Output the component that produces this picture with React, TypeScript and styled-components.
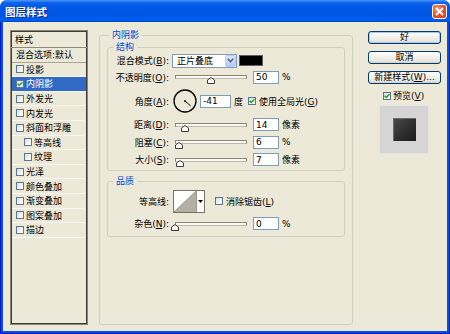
import React from 'react';
import styled, { createGlobalStyle } from 'styled-components';

const FONT = `"DejaVu Sans", "Noto Sans CJK SC", sans-serif`;

const GlobalStyle = createGlobalStyle`
  * { box-sizing: border-box; }
  html, body { margin: 0; padding: 0; background: #ffffff; }
  body { font-family: ${FONT}; font-size: 9px; color: #000; }
`;

const Window = styled.div`
  width: 450px;
  height: 334px;
  display: flex;
  flex-direction: column;
  background: #0A4FD8;
  border-radius: 7px 7px 0 0;
  overflow: hidden;
`;

const TitleBar = styled.div`
  flex: none;
  height: 22px;
  display: flex;
  align-items: center;
  justify-content: space-between;
  padding: 0 3px 0 5px;
  background: linear-gradient(to bottom, #4A9AFA 0%, #0E63EB 12%, #0057E6 35%, #0055E3 70%, #0060F2 90%, #0048CC 100%);
`;

const Title = styled.span`
  color: #fff;
  font-weight: bold;
  font-size: 10.5px;
  text-shadow: 1px 1px 0 #0A2A8C;
`;

const CloseButton = styled.div`
  width: 15px;
  height: 15px;
  border: 1px solid #fff;
  border-radius: 3px;
  background: radial-gradient(circle at 35% 30%, #F6A487 0%, #E5582E 45%, #C93D17 100%);
  display: flex;
  align-items: center;
  justify-content: center;
`;

const Frame = styled.div`
  flex: 1;
  display: flex;
  padding: 0 3px 3px;
  background: #0A4FD8;
  box-shadow: inset 1px 0 0 #0019CF, inset -1px 0 0 #0019CF, inset 0 -1px 0 #0019CF;
`;

const Body = styled.div`
  flex: 1;
  display: flex;
  align-items: flex-start;
  background: #ECE9D8;
  padding: 8px 0 0 7px;
`;

/* ---------- left style list ---------- */

const StyleList = styled.div`
  flex: none;
  width: 78px;
  height: 295px;
  border: 1px solid #8A877A;
  box-shadow: inset 1px 1px 0 #3D3C37, inset -1px -1px 0 #3D3C37;
  display: flex;
  flex-direction: column;
  background: #ECE9D8;
`;

const ListHeader = styled.div`
  flex: none;
  height: 17px;
  display: flex;
  align-items: center;
  padding-left: 4px;
  border-bottom: 1px solid #8E8B7C;
`;

const ListItem = styled.div<{ $selected?: boolean; $indent?: boolean; $strong?: boolean }>`
  flex: none;
  height: 14.6px;
  display: flex;
  align-items: center;
  gap: 2px;
  padding-left: ${(p) => (p.$indent ? 12 : 4)}px;
  margin: 0 1px;
  border-bottom: 1px solid ${(p) => (p.$strong ? '#A9A695' : '#F7F6F0')};
  background: ${(p) => (p.$selected ? '#316AC5' : 'transparent')};
  color: ${(p) => (p.$selected ? '#fff' : '#000')};
  white-space: nowrap;
`;

const CheckBox = styled.span`
  flex: none;
  width: 8px;
  height: 8px;
  border: 1px solid #5B7497;
  background: linear-gradient(135deg, #DCDCD7 0%, #F4F4F0 60%, #FFFFFF 100%);
  display: inline-flex;
  align-items: center;
  justify-content: center;
`;

const Check: React.FC<{ checked?: boolean }> = ({ checked }) => (
  <CheckBox>
    {checked && (
      <svg width="6" height="6" viewBox="0 0 6 6">
        <polyline points="0.6,2.8 2.3,4.5 5.4,1.2" fill="none" stroke="#21A121" strokeWidth="1.5" />
      </svg>
    )}
  </CheckBox>
);

/* ---------- group boxes ---------- */

const GroupBox = styled.fieldset`
  margin: 0;
  padding: 0;
  min-width: 0;
  border: 1px solid #D0D0BF;
  border-radius: 3px;
`;

const MainGroup = styled(GroupBox)`
  flex: none;
  width: 254px;
  height: 295px;
  margin-left: 11px;
`;

const SubGroup = styled(GroupBox)<{ $gapTop?: number }>`
  margin-top: ${(p) => p.$gapTop ?? 0}px;
`;

const Legend = styled.legend<{ $indent: number }>`
  margin-left: ${(p) => p.$indent}px;
  padding: 0 3px;
  height: 10px;
  line-height: 10px;
  color: #0046D5;
  font-size: 9px;
`;

const MainContent = styled.div`
  display: flex;
  flex-direction: column;
  padding: 2px 7px 0;
`;

const Rows = styled.div<{ $pt: number; $pb: number }>`
  display: flex;
  flex-direction: column;
  padding: ${(p) => p.$pt}px 0 ${(p) => p.$pb}px;
`;

const Row = styled.div<{ $h: number }>`
  flex: none;
  height: ${(p) => p.$h}px;
  display: flex;
  align-items: center;
  white-space: nowrap;
`;

const Label = styled.span`
  flex: none;
  width: 61px;
  text-align: right;
`;

const Key = styled.span`
  text-decoration: underline;
`;

const Select = styled.div`
  flex: none;
  margin-left: 3px;
  width: 65px;
  height: 14px;
  border: 1px solid #7F9DB9;
  background: #fff;
  display: flex;
  align-items: center;
`;

const SelectText = styled.span`
  flex: 1;
  padding-left: 4px;
`;

const SelectArrow = styled.span`
  flex: none;
  width: 11px;
  height: 12px;
  border: 1px solid #BCCEF6;
  border-radius: 2px;
  background: linear-gradient(to bottom, #DCE7FE, #B4C9F6);
  display: flex;
  align-items: center;
  justify-content: center;
`;

const Swatch = styled.span`
  flex: none;
  margin-left: 2px;
  width: 24px;
  height: 11px;
  background: #000;
  border: 1px solid #5E5E5E;
`;

const NumberBox = styled.input<{ $w: number }>`
  flex: none;
  margin: 0 0 0 3px;
  width: ${(p) => p.$w}px;
  height: 13px;
  padding: 0 0 0 2px;
  border: 1px solid #7F9DB9;
  background: #fff;
  font: 9px ${FONT};
  color: #000;
  outline: none;
`;

const Unit = styled.span<{ $gap?: number }>`
  margin-left: ${(p) => p.$gap ?? 3}px;
`;

const SliderBox = styled.div`
  position: relative;
  flex: none;
  margin-left: 3px;
  width: 78px;
  height: 12px;
`;

const SliderTrack = styled.div`
  margin: 4px 3px 0;
  height: 4px;
  border: 1px solid #8A877A;
  border-bottom-color: #BDBAAC;
  background: #FAF9F5;
`;

const SliderThumb = styled.svg`
  position: absolute;
  top: 6px;
`;

const Slider: React.FC<{ value: number }> = ({ value }) => (
  <SliderBox>
    <SliderTrack />
    <SliderThumb width="8" height="7" viewBox="0 0 8 7" style={{ left: 3 + value * 0.72 - 4 }}>
      <polygon points="0.5,6.5 0.5,3 4,0.5 7.5,3 7.5,6.5" fill="#FBFAF6" stroke="#3C3B36" strokeWidth="1" />
    </SliderThumb>
  </SliderBox>
);

const Dial = styled.svg`
  flex: none;
  margin-left: 4px;
`;

const CheckLabel = styled.span<{ $gap?: number }>`
  display: inline-flex;
  align-items: center;
  gap: 3px;
  margin-left: ${(p) => p.$gap ?? 0}px;
`;

const ContourPicker = styled.div`
  flex: none;
  margin-left: 4px;
  height: 23px;
  display: flex;
  border: 1px solid #77756A;
  background: #fff;
`;

const ContourPreview = styled.svg`
  display: block;
`;

const ContourArrow = styled.span`
  width: 8px;
  border-left: 1px solid #9A988C;
  display: flex;
  align-items: center;
  justify-content: center;
`;

/* ---------- right column ---------- */

const SideColumn = styled.div`
  flex: none;
  width: 73px;
  margin: 1px 0 0 15px;
  display: flex;
  flex-direction: column;
`;

const Button = styled.button<{ $default?: boolean; $top: number }>`
  height: 13px;
  width: 100%;
  margin-top: ${(p) => p.$top}px;
  padding: 0;
  font: 9px ${FONT};
  line-height: 11px;
  color: #000;
  border: 1px solid #003C74;
  border-radius: 3px;
  background: linear-gradient(to bottom, #FFFFFF 0%, #F4F3EE 40%, #E8E5DA 85%, #D6D0C5 100%);
  box-shadow: ${(p) => (p.$default ? 'inset 0 0 0 1px #A9C4F2' : 'inset 0 -1px 0 #D6D0C5')};
`;

const PreviewToggle = styled.div`
  display: flex;
  align-items: center;
  gap: 2px;
  height: 9px;
  margin-top: 7px;
  padding-left: 15px;
  white-space: nowrap;
`;

const PreviewBox = styled.div`
  width: 50px;
  height: 49px;
  margin: 5px 0 0 11px;
  background: #D5D5D5;
  border: 1px solid #E4E4E4;
  display: flex;
  align-items: center;
  justify-content: center;
`;

const PreviewSwatch = styled.div`
  width: 23px;
  height: 23px;
  background: linear-gradient(to bottom right, #4B4B4B 0%, #2E2E2E 55%, #1C1C1C 100%);
  box-shadow: inset 1px 1px 0 #6C6C6C;
`;

const styleItems: { label: string; checked?: boolean; selected?: boolean; indent?: boolean }[] = [
  { label: '投影' },
  { label: '内阴影', checked: true, selected: true },
  { label: '外发光' },
  { label: '内发光' },
  { label: '斜面和浮雕' },
  { label: '等高线', indent: true },
  { label: '纹理', indent: true },
  { label: '光泽' },
  { label: '颜色叠加' },
  { label: '渐变叠加' },
  { label: '图案叠加' },
  { label: '描边' },
];

const rad = (41 * Math.PI) / 180;

export default function App() {
  return (
    <>
      <GlobalStyle />
      <Window>
        <TitleBar>
          <Title>图层样式</Title>
          <CloseButton>
            <svg width="9" height="9" viewBox="0 0 9 9">
              <line x1="1" y1="1" x2="8" y2="8" stroke="#fff" strokeWidth="1.8" />
              <line x1="8" y1="1" x2="1" y2="8" stroke="#fff" strokeWidth="1.8" />
            </svg>
          </CloseButton>
        </TitleBar>
        <Frame>
          <Body>
            <StyleList>
              <ListHeader>样式</ListHeader>
              <ListItem $strong>混合选项:默认</ListItem>
              {styleItems.map((it) => (
                <ListItem key={it.label} $selected={it.selected} $indent={it.indent}>
                  <Check checked={it.checked} />
                  <span>{it.label}</span>
                </ListItem>
              ))}
            </StyleList>

            <MainGroup>
              <Legend $indent={9}>内阴影</Legend>
              <MainContent>
                <SubGroup>
                  <Legend $indent={5}>结构</Legend>
                  <Rows $pt={1} $pb={2}>
                    <Row $h={15}>
                      <Label>混合模式(<Key>B</Key>):</Label>
                      <Select>
                        <SelectText>正片叠底</SelectText>
                        <SelectArrow>
                          <svg width="7" height="5" viewBox="0 0 7 5">
                            <polyline points="0.7,0.8 3.5,3.6 6.3,0.8" fill="none" stroke="#4D6185" strokeWidth="1.5" />
                          </svg>
                        </SelectArrow>
                      </Select>
                      <Swatch />
                    </Row>
                    <Row $h={18}>
                      <Label>不透明度(<Key>O</Key>):</Label>
                      <Slider value={50} />
                      <NumberBox $w={26} readOnly defaultValue="50" />
                      <Unit>%</Unit>
                    </Row>
                    <Row $h={30}>
                      <Label>角度(<Key>A</Key>):</Label>
                      <Dial width="24" height="24" viewBox="0 0 24 24">
                        <circle cx="12" cy="12" r="11" fill="none" stroke="#000" strokeWidth="1.3" />
                        <line x1="12" y1="12" x2={12 + 7.5 * Math.cos(rad)} y2={12 + 7.5 * Math.sin(rad)} stroke="#000" strokeWidth="1" />
                        <circle cx="12" cy="12" r="0.9" fill="#000" />
                      </Dial>
                      <NumberBox $w={31} readOnly defaultValue="-41" />
                      <Unit>度</Unit>
                      <CheckLabel $gap={5}>
                        <Check checked />
                        <span>使用全局光(<Key>G</Key>)</span>
                      </CheckLabel>
                    </Row>
                    <Row $h={17}>
                      <Label>距离(<Key>D</Key>):</Label>
                      <Slider value={14} />
                      <NumberBox $w={26} readOnly defaultValue="14" />
                      <Unit>像素</Unit>
                    </Row>
                    <Row $h={18}>
                      <Label>阻塞(<Key>C</Key>):</Label>
                      <Slider value={6} />
                      <NumberBox $w={26} readOnly defaultValue="6" />
                      <Unit>%</Unit>
                    </Row>
                    <Row $h={17}>
                      <Label>大小(<Key>S</Key>):</Label>
                      <Slider value={7} />
                      <NumberBox $w={26} readOnly defaultValue="7" />
                      <Unit>像素</Unit>
                    </Row>
                  </Rows>
                </SubGroup>

                <SubGroup $gapTop={5}>
                  <Legend $indent={5}>品质</Legend>
                  <Rows $pt={2} $pb={3}>
                    <Row $h={26}>
                      <Label>等高线:</Label>
                      <ContourPicker>
                        <ContourPreview width="22" height="21" viewBox="0 0 22 21">
                          <polygon points="0,21 22,0 22,21" fill="#B3AFA3" />
                          <line x1="0" y1="21" x2="22" y2="0" stroke="#8C897D" strokeWidth="0.8" />
                        </ContourPreview>
                        <ContourArrow>
                          <svg width="5" height="3" viewBox="0 0 5 3">
                            <polygon points="0,0 5,0 2.5,3" fill="#000" />
                          </svg>
                        </ContourArrow>
                      </ContourPicker>
                      <CheckLabel $gap={10}>
                        <Check />
                        <span>消除锯齿(<Key>L</Key>)</span>
                      </CheckLabel>
                    </Row>
                    <Row $h={19}>
                      <Label>杂色(<Key>N</Key>):</Label>
                      <Slider value={0} />
                      <NumberBox $w={26} readOnly defaultValue="0" />
                      <Unit>%</Unit>
                    </Row>
                  </Rows>
                </SubGroup>
              </MainContent>
            </MainGroup>

            <SideColumn>
              <Button $default $top={0}>好</Button>
              <Button $top={7}>取消</Button>
              <Button $top={7}>新建样式(<Key>W</Key>)...</Button>
              <PreviewToggle>
                <Check checked />
                <span>预览(<Key>V</Key>)</span>
              </PreviewToggle>
              <PreviewBox>
                <PreviewSwatch />
              </PreviewBox>
            </SideColumn>
          </Body>
        </Frame>
      </Window>
    </>
  );
}
